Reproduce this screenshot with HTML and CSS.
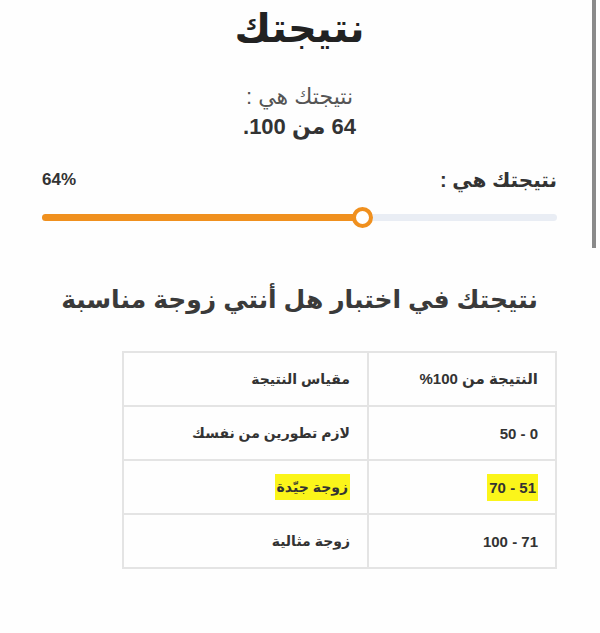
FILE: index.html
```html
<!DOCTYPE html>
<html lang="ar" dir="rtl">
<head>
  <meta charset="UTF-8" />
  <meta name="viewport" content="width=device-width, initial-scale=1.0"/>
  <title>نتيجتك</title>
  <link rel="stylesheet" href="styles.css">
</head>
<body>

  <div class="scroll-thumb"></div>

  <div class="result-page">
    <h1 class="page-title">نتيجتك</h1>

    <div class="score-text">
      <p class="score-label">نتيجتك هي :</p>
      <p class="score-value">64 من 100.</p>
    </div>

    <div class="progress-head">
      <span class="progress-label">نتيجتك هي :</span>
      <span class="progress-percent">64%</span>
    </div>

    <div class="progress-track">
      <div class="progress-fill" style="width: 62.3%;">
        <span class="progress-knob"></span>
      </div>
    </div>

    <h2 class="quiz-title">نتيجتك في اختبار هل أنتي زوجة مناسبة</h2>

    <table class="score-table">
      <tr>
        <td class="col-range">النتيجة من 100%</td>
        <td>مقياس النتيجة</td>
      </tr>
      <tr>
        <td class="col-range">0 - 50</td>
        <td>لازم تطورين من نفسك</td>
      </tr>
      <tr>
        <td class="col-range"><mark>51 - 70</mark></td>
        <td><mark>زوجة جيّدة</mark></td>
      </tr>
      <tr>
        <td class="col-range">71 - 100</td>
        <td>زوجة مثالية</td>
      </tr>
    </table>
  </div>

</body>
</html>
```

FILE: styles.css
```css
body {
  margin: 0;
  padding: 0;
  font-family: 'Liberation Sans', 'DejaVu Sans', sans-serif;
  background-color: #fefefe;
  color: #333;
}

.scroll-thumb {
  position: absolute;
  top: 0;
  right: 4px;
  width: 4px;
  height: 248px;
  background: #8a8a8a;
}

.result-page {
  padding: 0 43px 0 42px;
}

.page-title {
  margin: 0;
  padding-top: 4px;
  text-align: center;
  font-size: 40px;
  font-weight: 700;
  color: #222;
  line-height: 48px;
}

.score-text {
  margin-top: 30px;
  text-align: center;
}

.score-text p {
  margin: 0;
  line-height: 30px;
}

.score-label {
  font-size: 22px;
  color: #555;
}

.score-value {
  font-size: 22px;
  font-weight: 700;
  color: #333;
}

.progress-head {
  display: flex;
  justify-content: space-between;
  align-items: center;
  margin-top: 26px;
}

.progress-label {
  font-size: 20px;
  font-weight: 700;
  color: #333;
}

.progress-percent {
  font-size: 17px;
  font-weight: 700;
  color: #333;
}

.progress-track {
  direction: ltr;
  margin-top: 22px;
  height: 7px;
  border-radius: 4px;
  background: #e9edf4;
}

.progress-fill {
  position: relative;
  height: 100%;
  border-radius: 4px;
  background: #f0901e;
}

.progress-knob {
  position: absolute;
  right: -10px;
  top: -7px;
  width: 13px;
  height: 13px;
  border: 4px solid #f0901e;
  border-radius: 50%;
  background: #fff;
}

.quiz-title {
  margin: 64px 0 0;
  text-align: center;
  font-size: 25px;
  font-weight: 700;
  color: #3a3a3a;
}

.score-table {
  margin-top: 37px;
  margin-left: 38px;
  width: 435px;
  border-collapse: collapse;
  border: 2px solid #e4e4e4;
}

.score-table td {
  height: 52px;
  padding: 0 17px;
  border: 2px solid #e4e4e4;
  font-size: 14px;
  font-weight: 700;
  color: #333;
}

.score-table .col-range {
  width: 152px;
  font-size: 15px;
}

.score-table mark {
  background: #fbf51a;
  padding: 5px 2px;
  color: #333;
}
```
